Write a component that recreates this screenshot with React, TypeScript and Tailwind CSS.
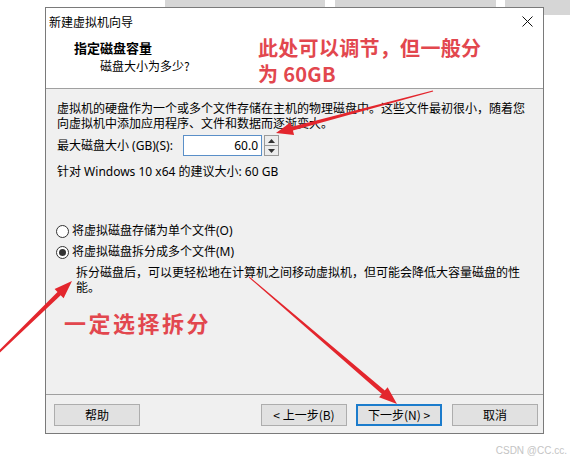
import { type FC } from 'react';

type Pt = [number, number];

// tapered arrow shape, thin at the tail, widening to the head
const arrowPoints = (s: Pt, t: Pt, w0: number, w1: number, hl: number, hw: number) => {
  const dx = t[0] - s[0], dy = t[1] - s[1];
  const len = Math.hypot(dx, dy);
  const ux = dx / len, uy = dy / len;
  const nx = -uy, ny = ux;
  const bx = t[0] - ux * hl, by = t[1] - uy * hl;
  const pts: Pt[] = [
    [s[0] + nx * w0 / 2, s[1] + ny * w0 / 2],
    [bx + nx * w1 / 2, by + ny * w1 / 2],
    [bx + nx * hw / 2, by + ny * hw / 2],
    [t[0], t[1]],
    [bx - nx * hw / 2, by - ny * hw / 2],
    [bx - nx * w1 / 2, by - ny * w1 / 2],
    [s[0] - nx * w0 / 2, s[1] - ny * w0 / 2],
  ];
  return pts.map(p => p[0].toFixed(1) + ',' + p[1].toFixed(1)).join(' ');
};

const Radio: FC<{ checked?: boolean; label: string }> = ({ checked, label }) => (
  <div className="flex items-center h-[16px]">
    <span className="w-[13px] h-[13px] rounded-full border border-[#333] bg-white flex items-center justify-center ml-[-1px]">
      {checked && <span className="w-[7px] h-[7px] rounded-full bg-[#333]" />}
    </span>
    <span className="ml-[3px] text-[12px] leading-[16px]">{label}</span>
  </div>
);

const Btn: FC<{ label: string; primary?: boolean }> = ({ label, primary }) => (
  <div
    className={
      'w-[86px] h-[22px] bg-[#e1e1e1] flex items-center justify-center text-[12px] text-black ' +
      (primary ? 'border-2 border-[#1c7ccc]' : 'border border-[#adadad]')
    }
  >
    {label}
  </div>
);

export default function App() {
  return (
    <div className="relative w-[570px] h-[461px] overflow-hidden bg-white text-black font-['Noto_Sans_CJK_SC','Noto_Sans',sans-serif]">
      {/* windows behind the dialog */}
      <div className="absolute top-0 left-[165px] w-[160px] h-[7px] bg-[#d6d6d6]" />
      <div className="absolute top-0 left-[335px] w-[161px] h-[7px] bg-[#d6d6d6]" />
      <div className="absolute top-0 left-[505px] w-[65px] h-[15px] bg-[#d6d6d6]" />

      <div className="relative ml-[45px] mt-[7px] w-[499px] h-[427px] border border-[#7a7a7a] bg-[#f0f0f0] flex flex-col">
        {/* title bar */}
        <div className="h-[27px] bg-white flex items-center justify-between pl-[3px] pr-[10px]">
          <span className="text-[12px] leading-[16px]">新建虚拟机向导</span>
          <svg width="11" height="11" viewBox="0 0 11 11">
            <path d="M0.5 0.5 L10.5 10.5 M10.5 0.5 L0.5 10.5" stroke="#111" strokeWidth="1" />
          </svg>
        </div>

        {/* header */}
        <div className="h-[54px] bg-white border-b border-[#a0a0a0] pt-[5px]">
          <div className="pl-[28px] text-[13px] leading-[16px] font-bold">指定磁盘容量</div>
          <div className="pl-[54px] mt-[2px] text-[12px] leading-[16px]">磁盘大小为多少?</div>
        </div>

        {/* body */}
        <div className="flex-1 px-[11px] pt-[12px] text-[12px] leading-[15px] font-['Noto_Sans','Noto_Sans_CJK_SC',sans-serif]">
          <div>虚拟机的硬盘作为一个或多个文件存储在主机的物理磁盘中。这些文件最初很小，随着您</div>
          <div>向虚拟机中添加应用程序、文件和数据而逐渐变大。</div>

          <div className="flex items-center mt-[4px] h-[21px]">
            <span className="w-[126px]">最大磁盘大小 (GB)(S):</span>
            <div className="w-[79px] h-[21px] bg-white border border-[#5a8fc8] flex items-center justify-end pr-[3px]">
              60.0
            </div>
            <div className="ml-[2px] flex flex-col h-[21px] w-[15px]">
              <div className="flex-1 border border-[#9a9a9a] bg-[#ececec] flex items-center justify-center">
                <svg width="7" height="4" viewBox="0 0 7 4"><path d="M0 4 L3.5 0 L7 4 Z" fill="#333" /></svg>
              </div>
              <div className="flex-1 border border-t-0 border-[#9a9a9a] bg-[#ececec] flex items-center justify-center">
                <svg width="7" height="4" viewBox="0 0 7 4"><path d="M0 0 L3.5 4 L7 0 Z" fill="#333" /></svg>
              </div>
            </div>
          </div>

          <div className="mt-[8px]">针对 Windows 10 x64 的建议大小: 60 GB</div>

          <div className="mt-[44px] flex flex-col gap-[5px]">
            <Radio label="将虚拟磁盘存储为单个文件(O)" />
            <Radio checked label="将虚拟磁盘拆分成多个文件(M)" />
          </div>
          <div className="pl-[19px] mt-[5px]">
            <div>拆分磁盘后，可以更轻松地在计算机之间移动虚拟机，但可能会降低大容量磁盘的性</div>
            <div>能。</div>
          </div>
        </div>

        {/* footer */}
        <div className="h-[39px] border-t border-[#a0a0a0] flex items-start pt-[9px] pl-[8px] pr-[5px]">
          <Btn label="帮助" />
          <div className="flex-1" />
          <div className="flex gap-[9px]">
            <Btn label="< 上一步(B)" />
            <Btn primary label="下一步(N) >" />
          </div>
          <div className="w-[10px]" />
          <Btn label="取消" />
        </div>
      </div>

      {/* annotations */}
      <div className="absolute left-[258px] top-[35px] text-[20px] leading-[26px] font-bold text-[#e2474e] tracking-[0.3px]">
        <div>此处可以调节，但一般分</div>
        <div>为 60GB</div>
      </div>
      <div className="absolute left-[64px] top-[308px] text-[22px] leading-[28px] font-bold text-[#e2474e] tracking-[2.5px]">
        一定选择拆分
      </div>

      <svg className="absolute inset-0 pointer-events-none" width="570" height="461" viewBox="0 0 570 461">
        <polygon points={arrowPoints([433, 91], [276, 133], 1.2, 4, 17, 13)} fill="#e3262d" />
        <polygon points={arrowPoints([-4, 355], [72, 281], 2, 4.5, 18, 13)} fill="#e3262d" />
        <polygon points={arrowPoints([249, 277], [397, 404], 1, 4.5, 18, 13)} fill="#e3262d" />
      </svg>

      <div className="absolute right-[3px] bottom-[3px] text-[10px] text-[#c4c4c4] font-['Liberation_Sans',sans-serif]">
        CSDN @CC.cc.
      </div>
    </div>
  );
}
